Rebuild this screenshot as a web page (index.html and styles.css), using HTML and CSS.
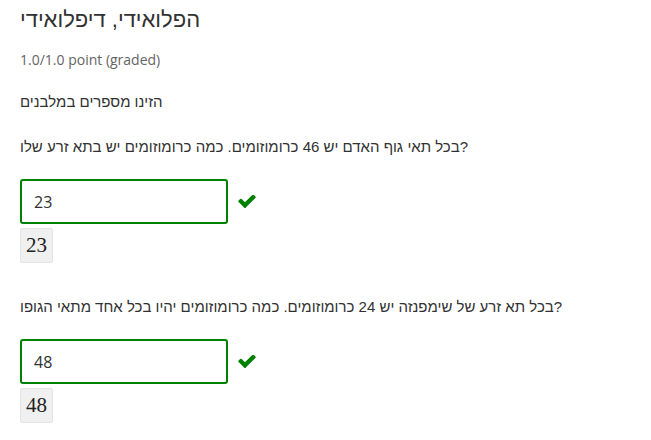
FILE: index.html
```html
<!DOCTYPE html>
<html lang="he">
<head>
<meta charset="utf-8">
<link rel="stylesheet" href="styles.css">
</head>
<body>
<div class="page" dir="ltr">
  <h2 class="title">הפלואידי, דיפלואידי</h2>
  <div class="score">1.0/1.0 point (graded)</div>
  <p class="instr">הזינו מספרים במלבנים</p>

  <p class="question q-first">בכל תאי גוף האדם יש 46 כרומוזומים. כמה כרומוזומים יש בתא זרע שלו?</p>
  <div class="answer">
    <div class="input-row">
      <div class="input">23</div>
      <svg class="check" viewBox="121 370 1550 1156" width="18" height="13" aria-hidden="true"><path fill="#008100" d="M1671 566q0 40-28 68l-724 724-136 136q-28 28-68 28t-68-28l-136-136-362-362q-28-28-28-68t28-68l136-136q28-28 68-28t68 28l294 295 656-657q28-28 68-28t68 28l136 136q28 28 28 68z"/></svg>
    </div>
    <div class="preview">23</div>
  </div>

  <p class="question q-second">בכל תא זרע של שימפנזה יש 24 כרומוזומים. כמה כרומוזומים יהיו בכל אחד מתאי הגופו?</p>
  <div class="answer">
    <div class="input-row">
      <div class="input">48</div>
      <svg class="check" viewBox="121 370 1550 1156" width="18" height="13" aria-hidden="true"><path fill="#008100" d="M1671 566q0 40-28 68l-724 724-136 136q-28 28-68 28t-68-28l-136-136-362-362q-28-28-28-68t28-68l136-136q28-28 68-28t68 28l294 295 656-657q28-28 68-28t68 28l136 136q28 28 28 68z"/></svg>
    </div>
    <div class="preview">48</div>
  </div>
</div>
</body>
</html>
```

FILE: styles.css
```css
html, body {
  margin: 0;
  padding: 0;
  background: #ffffff;
}

.page {
  padding: 6px 20px 0 20px;
  font-family: "Open Sans", "DejaVu Sans", sans-serif;
  color: #313131;
}

.title {
  margin: 0;
  font-family: "Liberation Sans", "DejaVu Sans", sans-serif;
  font-size: 22px;
  line-height: 28px;
  font-weight: 400;
  color: #313131;
}

.score {
  margin-top: 16px;
  font-size: 14px;
  line-height: 20px;
  color: #646464;
}

.instr {
  margin: 22px 0 0 0;
  font-family: "Liberation Sans", "DejaVu Sans", sans-serif;
  font-size: 15px;
  line-height: 20px;
  color: #313131;
}

.question {
  margin: 0;
  font-family: "Liberation Sans", "DejaVu Sans", sans-serif;
  font-size: 15px;
  line-height: 20px;
  color: #313131;
}

.q-first {
  margin-top: 25px;
}

.q-second {
  margin-top: 34px;
}

.answer {
  margin-top: 22px;
}

.input-row {
  display: flex;
  align-items: center;
  gap: 10px;
}

.input {
  box-sizing: border-box;
  width: 208px;
  height: 45px;
  border: 2px solid #008100;
  border-radius: 3px;
  padding: 0 12px;
  display: flex;
  align-items: center;
  font-size: 16px;
  color: #313131;
}

.check {
  display: block;
}

.preview {
  box-sizing: border-box;
  margin-top: 4px;
  width: 33px;
  height: 35px;
  background: #f0f0f0;
  border: 1px solid #e4e4e4;
  border-radius: 2px;
  display: flex;
  align-items: center;
  justify-content: center;
  font-family: "Liberation Serif", "DejaVu Serif", serif;
  font-size: 21px;
  color: #222222;
}
```
